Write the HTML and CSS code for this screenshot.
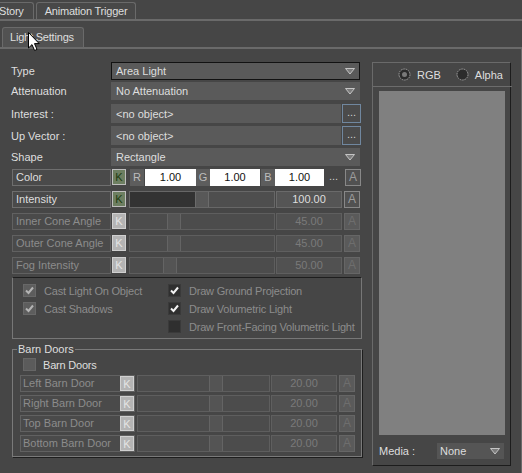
FILE: index.html
```html
<!DOCTYPE html>
<html lang="en">
<head>
  <meta charset="UTF-8">
  <title>Light Settings</title>
  <link rel="stylesheet" href="styles.css">
</head>
<body>

  <div class="tabbar top">
    <div class="tab story">Story</div>
    <div class="tab anim">Animation Trigger</div>
  </div>

  <div class="tabbar sub">
    <div class="tab active">Light Settings</div>
  </div>

  <div class="pane">
    <div class="props">

      <div class="field-row type-row">
        <span class="name">Type</span>
        <div class="select focused">Area Light
          <svg class="arrow" width="10" height="7"><polygon points="0.5,0.5 9.5,0.5 5,6" fill="#7c7c7c" stroke="#c4c4c4"/></svg>
        </div>
      </div>
      <div class="field-row att-row">
        <span class="name">Attenuation</span>
        <div class="select">No Attenuation
          <svg class="arrow" width="10" height="7"><polygon points="0.5,0.5 9.5,0.5 5,6" fill="#7c7c7c" stroke="#c4c4c4"/></svg>
        </div>
      </div>
      <div class="field-row obj-row">
        <span class="name">Interest :</span>
        <div class="select short">&lt;no object&gt;</div>
        <div class="dots-btn">...</div>
      </div>
      <div class="field-row obj-row">
        <span class="name">Up Vector :</span>
        <div class="select short">&lt;no object&gt;</div>
        <div class="dots-btn">...</div>
      </div>
      <div class="field-row shape-row">
        <span class="name">Shape</span>
        <div class="select">Rectangle
          <svg class="arrow" width="10" height="7"><polygon points="0.5,0.5 9.5,0.5 5,6" fill="#7c7c7c" stroke="#c4c4c4"/></svg>
        </div>
      </div>

      <div class="param-row">
        <div class="plabel"><span class="ptext">Color</span><span class="kbtn">K</span></div>
        <span class="chan r">R</span><span class="cinput">1.00</span>
        <span class="chan">G</span><span class="cinput g">1.00</span>
        <span class="chan b">B</span><span class="cinput bl">1.00</span>
        <span class="cdots">...</span>
        <span class="abtn">A</span>
      </div>
      <div class="param-row">
        <div class="plabel"><span class="ptext">Intensity</span><span class="kbtn">K</span></div>
        <div class="slider"><span class="fill dark" style="width: 65px"></span><span class="thumb"></span></div>
        <span class="val">100.00</span>
        <span class="abtn">A</span>
      </div>
      <div class="param-row off">
        <div class="plabel"><span class="ptext">Inner Cone Angle</span><span class="kbtn">K</span></div>
        <div class="slider"><span class="fill" style="width: 37px"></span><span class="thumb"></span></div>
        <span class="val">45.00</span>
        <span class="abtn">A</span>
      </div>
      <div class="param-row off">
        <div class="plabel"><span class="ptext">Outer Cone Angle</span><span class="kbtn">K</span></div>
        <div class="slider"><span class="fill" style="width: 37px"></span><span class="thumb"></span></div>
        <span class="val">45.00</span>
        <span class="abtn">A</span>
      </div>
      <div class="param-row off">
        <div class="plabel"><span class="ptext">Fog Intensity</span><span class="kbtn">K</span></div>
        <div class="slider"><span class="fill" style="width: 33px"></span><span class="thumb"></span></div>
        <span class="val">50.00</span>
        <span class="abtn">A</span>
      </div>

      <div class="options">
        <label class="check"><span class="box dis"><svg width="11" height="11"><polyline points="2,5.5 4.5,8 9,2.5" fill="none" stroke="#b4b4b4" stroke-width="2"/></svg></span>Cast Light On Object</label>
        <label class="check"><span class="box on"><svg width="11" height="11"><polyline points="2,5.5 4.5,8 9,2.5" fill="none" stroke="#f2f2f2" stroke-width="2"/></svg></span>Draw Ground Projection</label>
        <label class="check"><span class="box dis"><svg width="11" height="11"><polyline points="2,5.5 4.5,8 9,2.5" fill="none" stroke="#b4b4b4" stroke-width="2"/></svg></span>Cast Shadows</label>
        <label class="check"><span class="box on"><svg width="11" height="11"><polyline points="2,5.5 4.5,8 9,2.5" fill="none" stroke="#f2f2f2" stroke-width="2"/></svg></span>Draw Volumetric Light</label>
        <span></span>
        <label class="check"><span class="box on"></span>Draw Front-Facing Volumetric Light</label>
      </div>

      <fieldset class="barn">
        <legend>Barn Doors</legend>
        <label class="check barn-check"><span class="box gray"></span>Barn Doors</label>

        <div class="barn-row">
          <div class="blabel"><span class="ptext">Left Barn Door</span><span class="kbtn">K</span></div>
          <div class="slider"><span class="fill" style="width: 71px"></span><span class="thumb"></span></div>
          <span class="val">20.00</span>
          <span class="abtn">A</span>
        </div>
        <div class="barn-row">
          <div class="blabel"><span class="ptext">Right Barn Door</span><span class="kbtn">K</span></div>
          <div class="slider"><span class="fill" style="width: 71px"></span><span class="thumb"></span></div>
          <span class="val">20.00</span>
          <span class="abtn">A</span>
        </div>
        <div class="barn-row">
          <div class="blabel"><span class="ptext">Top Barn Door</span><span class="kbtn">K</span></div>
          <div class="slider"><span class="fill" style="width: 71px"></span><span class="thumb"></span></div>
          <span class="val">20.00</span>
          <span class="abtn">A</span>
        </div>
        <div class="barn-row">
          <div class="blabel"><span class="ptext">Bottom Barn Door</span><span class="kbtn">K</span></div>
          <div class="slider"><span class="fill" style="width: 71px"></span><span class="thumb"></span></div>
          <span class="val">20.00</span>
          <span class="abtn">A</span>
        </div>
      </fieldset>
    </div>

    <div class="viewer">
      <div class="radios">
        <label class="radio">
          <svg width="13" height="13"><circle cx="6.5" cy="6.5" r="5.5" fill="#2c2c2c" stroke="#a0a0a0" stroke-dasharray="1.6 0.8"/><circle cx="6.5" cy="6.5" r="2.5" fill="#7a7a7a"/></svg>
          RGB
        </label>
        <label class="radio">
          <svg width="13" height="13"><circle cx="6.5" cy="6.5" r="5.5" fill="#2c2c2c" stroke="#a0a0a0" stroke-dasharray="1.6 0.8"/></svg>
          Alpha
        </label>
      </div>
      <div class="screen"></div>
      <div class="media">
        <span class="media-name">Media :</span>
        <div class="select media-select">None
          <svg class="arrow" width="10" height="7"><polygon points="0.5,0.5 9.5,0.5 5,6" fill="#7c7c7c" stroke="#c4c4c4"/></svg>
        </div>
      </div>
    </div>
  </div>

  <svg class="cursor" width="13" height="20"><path d="M0.5,0.5 L0.5,16 L4,12.6 L6.6,18.5 L9,17.4 L6.5,11.6 L11.2,11.6 Z" fill="#fff" stroke="#000"/></svg>

</body>
</html>
```

FILE: styles.css
```css
body {
  margin: 0;
  width: 522px;
  height: 473px;
  overflow: hidden;
  position: relative;
  background-color: #464646;
  color: #dedede;
  font-family: "Liberation Sans", Arial, sans-serif;
  font-size: 11px;
}

/* Tabs */
.tabbar {
  display: flex;
  align-items: flex-end;
}

.tabbar.top {
  height: 19px;
  border-bottom: 2px solid #6a6a6a;
  gap: 2px;
}

.tabbar.sub {
  height: 26px;
}

.tab {
  box-sizing: border-box;
  height: 17px;
  line-height: 16px;
  padding: 0 9px;
  border: 1px solid #6a6a6a;
  border-bottom: none;
  border-radius: 3px 3px 0 0;
  background-color: #484848;
  white-space: nowrap;
  letter-spacing: -0.2px;
}

.tab.story {
  margin-left: -11px;
}

.tab.anim {
  width: 100px;
  padding: 0 0 0 8px;
}

.tab.active {
  width: 82px;
  height: 20px;
  line-height: 19px;
  margin-left: 2px;
  padding: 0 0 0 7px;
  background-color: #525252;
}

.pane {
  box-sizing: border-box;
  height: 426px;
  display: flex;
  align-items: flex-start;
  padding: 13px 0 0 9px;
  border-top: 2px solid #6a6a6a;
  border-right: 1px solid #6a6a6a;
}

.props {
  width: 352px;
}

/* Plain field rows */
.field-row {
  display: flex;
  align-items: center;
  height: 18px;
}

.type-row { margin-bottom: 2px; }
.att-row { margin-bottom: 4px; }
.obj-row { height: 19px; margin-bottom: 3px; }
.shape-row { margin-bottom: 3px; }

.name {
  box-sizing: border-box;
  width: 102px;
  padding-left: 2px;
}

.select {
  box-sizing: border-box;
  width: 249px;
  height: 100%;
  display: flex;
  align-items: center;
  justify-content: space-between;
  padding: 0 4px;
  background-color: #5a5a5a;
  border: 1px solid #5a5a5a;
}

.select.focused {
  border-color: #121212;
}

.select.short {
  width: 230px;
}

.arrow {
  display: block;
}

.dots-btn {
  box-sizing: border-box;
  width: 19px;
  height: 19px;
  margin-left: 1px;
  border: 1px solid #70879f;
  background-color: #4b4b4b;
  color: #cfcfcf;
  text-align: center;
  line-height: 15px;
}

/* Parameter rows */
.param-row {
  display: flex;
  height: 17px;
  margin: 0 0 5px 3px;
  line-height: 15px;
}

.plabel {
  display: flex;
  width: 114px;
}

.ptext {
  box-sizing: border-box;
  width: 99px;
  padding-left: 3px;
  border: 1px solid #6e6e6e;
  background-color: #4a4a4a;
  white-space: nowrap;
  overflow: hidden;
}

.kbtn {
  box-sizing: border-box;
  width: 14px;
  height: 16px;
  margin-left: 1px;
  border: 1px solid #bdbdbd;
  background-color: #6d7f61;
  color: #1d3b10;
  text-align: center;
  line-height: 14px;
  font-size: 11px;
}

.chan {
  width: 14px;
  background-color: #5d5d5d;
  color: #bcbcbc;
  text-align: center;
  line-height: 17px;
}

.chan.r { margin-left: 4px; }
.chan.b { margin-left: 1px; }

.cinput {
  width: 51px;
  margin-left: 1px;
  background-color: #fff;
  color: #111;
  text-align: center;
  line-height: 17px;
}

.cinput.g { width: 50px; margin-left: 0; }
.cinput.bl { width: 49px; margin-left: 0; }

.cdots {
  width: 19px;
  color: #cfcfcf;
  text-align: center;
}

.abtn {
  box-sizing: border-box;
  width: 16px;
  height: 17px;
  margin-left: 2px;
  border: 1px solid #888;
  background-color: #515151;
  color: #9c9c9c;
  text-align: center;
  font-size: 12px;
}

.slider {
  box-sizing: border-box;
  display: flex;
  width: 146px;
  margin-left: 3px;
  border: 1px solid #676767;
  background-color: #4e4e4e;
}

.fill.dark {
  background-color: #333;
}

.thumb {
  box-sizing: border-box;
  width: 14px;
  border: 1px solid #6b6b6b;
  border-top: none;
  border-bottom: none;
  background-color: #585858;
}

.val {
  box-sizing: border-box;
  width: 66px;
  margin-left: 1px;
  border: 1px solid #6a6a6a;
  background-color: #555;
  text-align: center;
}

/* disabled look */
.off .ptext,
.barn-row .ptext {
  color: #8c8c8c;
  border-color: #616161;
}

.off .kbtn,
.barn-row .kbtn {
  border-color: #d0d0d0;
  background-color: #b4b4b4;
  color: #e4e4e4;
}

.off .slider,
.barn-row .slider {
  border-color: #5e5e5e;
  background-color: #4c4c4c;
}

.off .thumb,
.barn-row .thumb {
  border-color: #646464;
  background-color: #545454;
}

.off .val,
.barn-row .val {
  color: #7a7a7a;
  border-color: #5f5f5f;
  background-color: #515151;
}

.off .abtn,
.barn-row .abtn {
  border-color: #666;
  background-color: #5a5a5a;
  color: #6e6e6e;
}

/* Checkboxes */
.options {
  box-sizing: border-box;
  width: 350px;
  height: 62px;
  margin: -2px 0 0 3px;
  padding: 6px 0 0 10px;
  display: grid;
  grid-template-columns: 145px 1fr;
  grid-auto-rows: 13px;
  row-gap: 5px;
  border: 1px solid #777;
  border-top-color: #1e1e1e;
}

.check {
  display: flex;
  align-items: center;
  color: #8c8c8c;
  white-space: nowrap;
  letter-spacing: -0.2px;
}

.box {
  box-sizing: border-box;
  width: 13px;
  height: 13px;
  margin-right: 8px;
  display: flex;
  align-items: center;
  justify-content: center;
}

.box.dis {
  background-color: #5d5d5d;
  border: 1px solid #686868;
}

.box.on {
  background-color: #2f2f2f;
  border: 1px solid #3a3a3a;
}

.box.gray {
  background-color: #5b5b5b;
  border: 1px solid #666;
  margin-right: 7px;
}

/* Barn Doors group */
.barn {
  box-sizing: border-box;
  width: 350px;
  margin: 4px 0 0 3px;
  padding: 2px 0 4px 7px;
  border: 1px solid #7a7a7a;
  box-shadow: 1px 1px 0 #1e1e1e;
}

.barn legend {
  margin-left: -3px;
  padding: 0 1px;
  line-height: 13px;
}

.barn-check {
  height: 13px;
  margin-left: 3px;
  color: #dedede;
}

.barn-row {
  display: flex;
  height: 17px;
  margin-top: 3px;
  line-height: 15px;
}

.barn-check + .barn-row {
  margin-top: 4px;
}

.blabel {
  box-sizing: border-box;
  display: flex;
  width: 115px;
  border: 1px solid #616161;
  background-color: #4a4a4a;
}

.blabel .ptext {
  flex: 1;
  border: none;
  padding-left: 2px;
}

.blabel .kbtn {
  height: 15px;
}

.barn-row .slider {
  width: 133px;
  margin-left: 2px;
}

.barn-row .val {
  width: 66px;
}

/* Viewer panel */
.viewer {
  box-sizing: border-box;
  width: 139px;
  height: 404px;
  margin-left: 11px;
  display: flex;
  flex-direction: column;
  border: 1px solid;
  border-color: #6a6a6a #1c1c1c #1c1c1c #6a6a6a;
}

.radios {
  height: 23px;
  display: flex;
  align-items: center;
  padding-left: 25px;
  border-bottom: 1px solid #6c6c6c;
  margin-right: -2px;
}

.radio {
  display: flex;
  align-items: center;
  gap: 6px;
  margin-right: 15px;
}

.radio svg {
  display: block;
}

.screen {
  height: 344px;
  margin: 4px 5px 0 6px;
  background-color: #808080;
}

.media {
  display: flex;
  align-items: center;
  height: 16px;
  margin: 8px 0 0 6px;
}

.media-name {
  width: 58px;
}

.select.media-select {
  width: 67px;
  padding: 0 3px 0 2px;
  background-color: #555;
  border-color: #555;
}

.cursor {
  position: absolute;
  left: 28px;
  top: 32px;
}
```
